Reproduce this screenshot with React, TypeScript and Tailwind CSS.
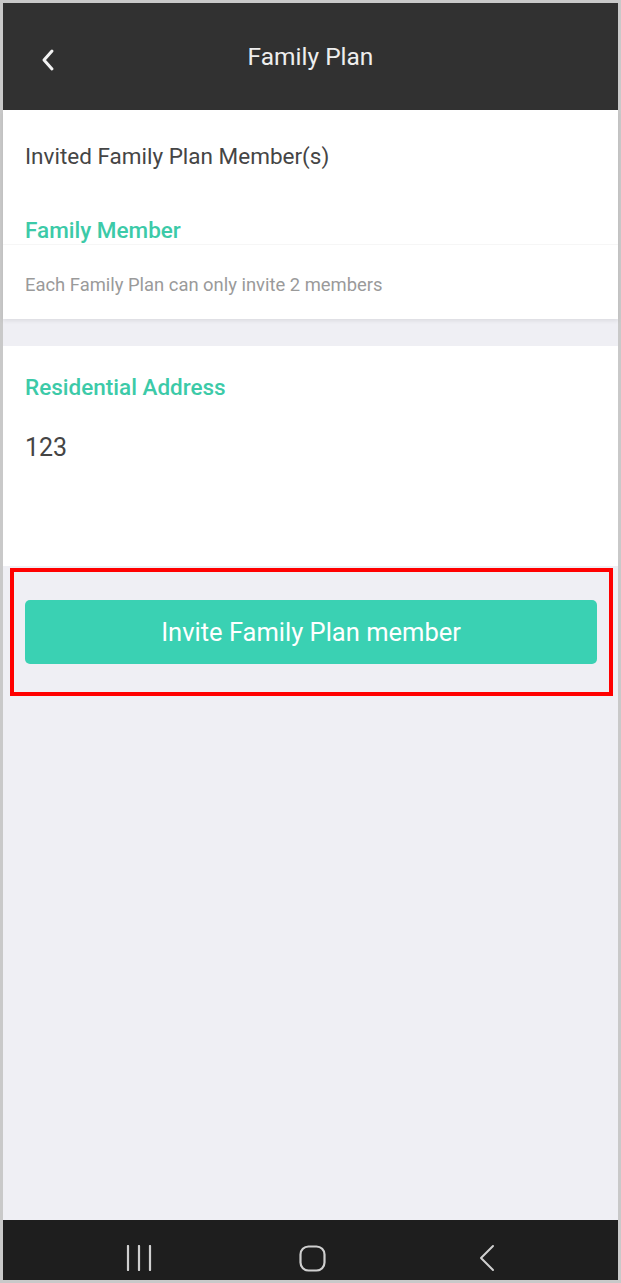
const font = { fontFamily: "Roboto, 'Noto Sans', sans-serif" };

export default function App() {
  return (
    <div className="w-[621px] h-[1283px] bg-[#c9c9c9] p-[3px]" style={font}>
      <div className="flex flex-col h-full bg-[#efeff4]">
        {/* 顶部导航 */}
        <div className="relative h-[107px] bg-[#313131] flex items-center justify-center shrink-0">
          <svg
            className="absolute left-[34px] top-[44px]"
            width="24"
            height="26"
            viewBox="0 0 24 26"
            fill="none"
          >
            <path d="M15 4 L7 13 L15 22" stroke="#f2f2f2" strokeWidth="3" strokeLinecap="round" strokeLinejoin="round" />
          </svg>
          <span className="text-[24.5px] text-[#eeeeee] mt-[2px]">Family Plan</span>
        </div>

        {/* 成员 */}
        <div className="bg-white shadow-[0_2px_4px_rgba(0,0,0,0.08)] shrink-0">
          <div className="h-[94px] flex items-center px-[22px] text-[22.5px] text-[#454545]">
            Invited Family Plan Member(s)
          </div>
          <div className="px-[22px] pt-[14px] leading-[24px] text-[22.5px] font-medium text-[#3ccaa8]">
            Family Member
          </div>
          <div className="mt-[2px] h-px bg-[#f6f6f6]" />
          <div className="px-[22px] pt-[30px] pb-[24px] leading-[20px] text-[18.4px] text-[#9a9a9a]">
            Each Family Plan can only invite 2 members
          </div>
        </div>

        {/* 地址 */}
        <div className="mt-[27px] bg-white h-[220px] px-[22px] pt-[29px] shrink-0">
          <div className="leading-[24px] text-[22.5px] font-medium text-[#3ccaa8]">Residential Address</div>
          <div className="mt-[35px] leading-[28px] text-[25px] text-[#454545]">123</div>
        </div>

        {/* 邀请按钮 */}
        <div className="mt-[2px] ml-[7px] mr-[5px] border-[4px] border-[#ff0000] pt-[28px] pb-[28px] pl-[11px] pr-[12px] shrink-0">
          <button className="w-full h-[64px] rounded-[5px] bg-[#3ad1b3] text-white text-[25.5px] flex items-center justify-center">
            Invite Family Plan member
          </button>
        </div>

        <div className="flex-1" />

        {/* 系统导航栏 */}
        <div className="h-[60px] bg-[#1e1e1e] flex items-center pt-[16px] shrink-0">
          <svg className="ml-[123px]" width="26" height="26" viewBox="0 0 26 26" fill="none">
            <path d="M2 1 V25 M13 1 V25 M24 1 V25" stroke="#cfcfcf" strokeWidth="2.2" strokeLinecap="round" />
          </svg>
          <svg className="ml-[147px]" width="27" height="27" viewBox="0 0 27 27" fill="none">
            <rect x="1.5" y="1.5" width="24" height="24" rx="8" stroke="#cfcfcf" strokeWidth="2.2" />
          </svg>
          <svg className="ml-[153px]" width="16" height="28" viewBox="0 0 16 28" fill="none">
            <path d="M14 2 L2 14 L14 26" stroke="#cfcfcf" strokeWidth="2" strokeLinecap="round" strokeLinejoin="round" />
          </svg>
        </div>
      </div>
    </div>
  );
}
